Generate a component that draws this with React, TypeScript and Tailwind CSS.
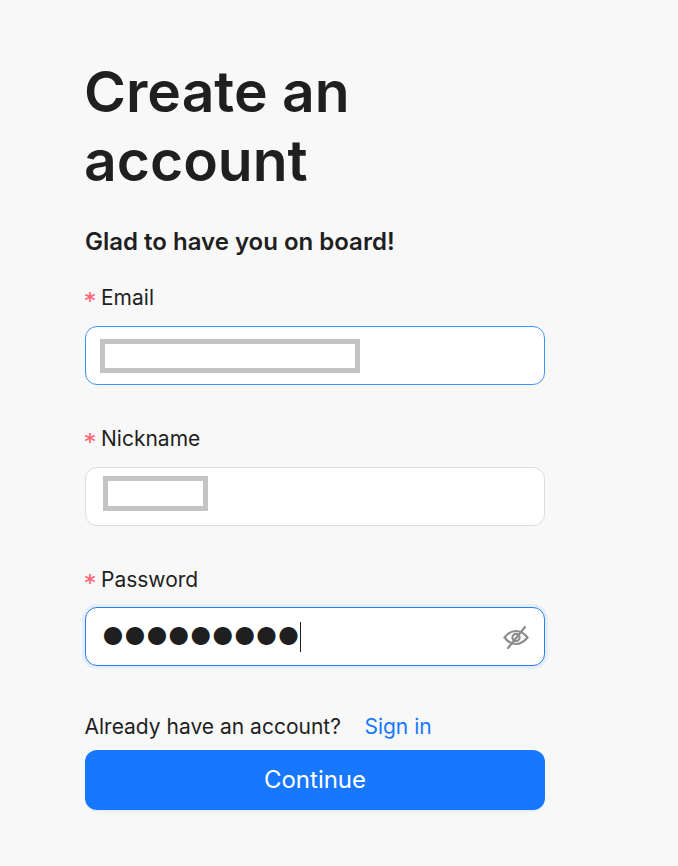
const FONT = "font-['Inter','Noto_Sans',sans-serif]";

function Label({ text }: { text: string }) {
  return (
    <div className="flex items-center h-[24px] text-[21px] leading-[24px] text-[#1f1f1f]">
      <span className="w-[16px] -translate-x-[0.5px] translate-y-[3px] font-['DejaVu_Sans',sans-serif] text-[21px] font-bold text-[#ff6b78]">*</span>
      <span>{text}</span>
    </div>
  );
}

function EyeHidden() {
  return (
    <svg width="26" height="24" viewBox="0 0 26 24" fill="none" stroke="#8c8c8c" strokeWidth="2.2" strokeLinecap="round">
      <path d="M1.5 12.5C5 8 8.8 6 13 6s8 2 11.5 6.5C21 17 17.2 19 13 19S5 17 1.5 12.5Z" />
      <circle cx="13" cy="12.5" r="3.6" />
      <path d="M22 2 5 23" />
    </svg>
  );
}

export default function App() {
  return (
    <div className={`${FONT} min-h-[866px] bg-[#f8f8f8] pl-[85px] pt-[57px]`}>
      <div className="w-[460px]">
        <h1 className="w-[330px] -ml-px text-[57px] leading-[69px] font-semibold text-[#1f1f1f]">Create an account</h1>

        <p className="mt-[32px] text-[24px] leading-[30px] font-semibold text-[#1f1f1f]">Glad to have you on board!</p>

        <div className="mt-[29px]">
          <Label text="Email" />
          <div className="mt-[16px] flex h-[59px] items-center rounded-[12px] border border-[#3d93ff] bg-white pl-[14px]">
            <div className="h-[34px] w-[260px] border-[5px] border-[#c4c4c4]" />
          </div>
        </div>

        <div className="mt-[42px]">
          <Label text="Nickname" />
          <div className="mt-[16px] flex h-[59px] items-center rounded-[12px] border border-[#dcdcdc] bg-white pl-[17px]">
            <div className="mb-[6px] h-[35px] w-[105px] border-[5px] border-[#c4c4c4]" />
          </div>
        </div>

        <div className="mt-[42px]">
          <Label text="Password" />
          <div className="mt-[15px] flex h-[59px] items-center rounded-[12px] border border-[#2b7de9] bg-white pl-[16px] pr-[15px] shadow-[0_0_0_3px_#e3effb]">
            <span className="text-[24px] leading-[30px] text-[#1f1f1f]">●●●●●●●●●</span>
            <span className="ml-[1px] h-[30px] w-px bg-[#1f1f1f]" />
            <span className="ml-auto flex">
              <EyeHidden />
            </span>
          </div>
        </div>

        <div className="mt-[49px] -ml-[0.5px] flex h-[24px] items-center text-[21px] leading-[24px]">
          <span className="text-[#1f1f1f]">Already have an account?</span>
          <a className="ml-[23.5px] text-[#1777ff]">Sign in</a>
        </div>

        <button className="mt-[11px] h-[60px] w-full rounded-[12px] bg-[#1777ff] text-[24px] text-white shadow-[0_2px_0_#e6f0fb]">Continue</button>
      </div>
    </div>
  );
}
